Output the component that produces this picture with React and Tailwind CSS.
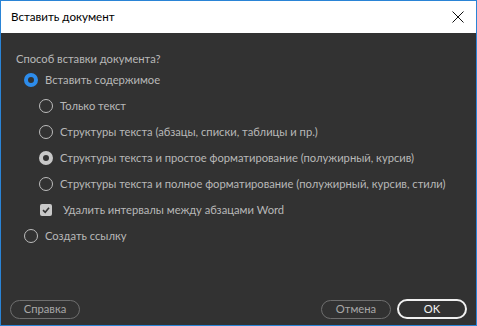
import React from "react";

function Radio({ state }) {
  if (state === "blue")
    return <span className="w-[14px] h-[14px] rounded-full border-[4px] border-[#2d8ceb] bg-[#323232] shrink-0" />;
  if (state === "gray")
    return <span className="w-[14px] h-[14px] rounded-full border-[4px] border-[#c8c8c8] bg-[#323232] shrink-0" />;
  return <span className="w-[14px] h-[14px] rounded-full border border-[#bdbdbd] shrink-0" />;
}

function Row({ state, label, indent }) {
  return (
    <div className={`flex items-center h-[26px] whitespace-nowrap ${indent ? "pl-[38px]" : "pl-[23px]"}`}>
      <Radio state={state} />
      <span className="ml-[7px]">{label}</span>
    </div>
  );
}

export default function App() {
  return (
    <div
      className="w-[477px] h-[326px] border border-[#2a84d6] flex flex-col bg-[#323232] text-[11.2px] text-[#b8b8b8]"
      style={{ fontFamily: 'Lato, "Noto Sans", sans-serif' }}
    >
      <div className="h-[32px] bg-white flex items-center justify-between pl-[10px] pr-[10px] text-[#000]">
        <span className="text-[11.6px]">Вставить документ</span>
        <svg width="12" height="12" viewBox="0 0 12 12" className="mr-[2px]">
          <path d="M0.5 0.5 L11.5 11.5 M11.5 0.5 L0.5 11.5" stroke="#111" strokeWidth="1" />
        </svg>
      </div>
      <div className="flex-1 flex flex-col pt-[13px]">
        <div className="pl-[15px] h-[26px] flex items-center">Способ вставки документа?</div>
        <div className="-mt-[5px]">
          <Row state="blue" label="Вставить содержимое" />
          <Row label="Только текст" indent />
          <Row label="Структуры текста (абзацы, списки, таблицы и пр.)" indent />
          <Row state="gray" label="Структуры текста и простое форматирование (полужирный, курсив)" indent />
          <Row label="Структуры текста и полное форматирование (полужирный, курсив, стили)" indent />
          <div className="flex items-center h-[26px] pl-[39px] whitespace-nowrap">
            <span className="w-[12px] h-[12px] rounded-[2px] bg-[#c8c8c8] flex items-center justify-center shrink-0">
              <svg width="10" height="10" viewBox="0 0 10 10">
                <path d="M2 5.2 L4.2 7.3 L8 2.8" stroke="#333" strokeWidth="1.6" fill="none" />
              </svg>
            </span>
            <span className="ml-[11px]">Удалить интервалы между абзацами Word</span>
          </div>
          <Row state="none" label="Создать ссылку" />
        </div>
        <div className="mt-auto mb-[6px] flex items-center px-[9px]">
          <button className="w-[70px] h-[19px] rounded-full border border-[#6e6e6e] text-[#a8a8a8] leading-none">Справка</button>
          <div className="flex-1" />
          <button className="w-[70px] h-[19px] rounded-full border border-[#6e6e6e] text-[#a8a8a8] leading-none">Отмена</button>
          <button className="ml-[6px] w-[70px] h-[20px] rounded-full border-2 border-[#f0f0f0] text-[#f2f2f2] leading-none">OK</button>
        </div>
      </div>
    </div>
  );
}
